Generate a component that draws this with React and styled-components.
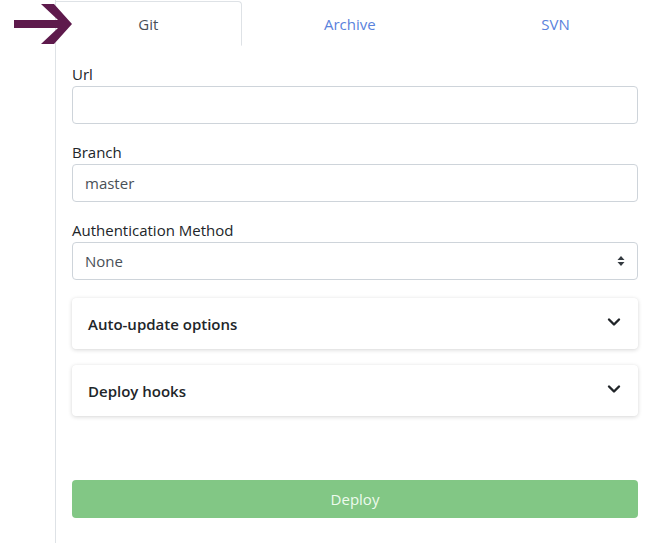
import React from 'react';
import styled, { createGlobalStyle } from 'styled-components';

const GlobalStyle = createGlobalStyle`
    * { box-sizing: border-box; }
    body {
        margin: 0;
        background: #fff;
        font-family: "Open Sans", "Noto Sans", "Liberation Sans", sans-serif;
        color: #212529;
    }
`;

const tabs = ['Git', 'Archive', 'SVN'];

function Arrow() {
    return (
        <ArrowMark width="74" height="48" viewBox="0 0 74 48">
            <polygon
                fill="#5e1a4c"
                points="14,20 58,20 41,4 54,4 72,24 54,44 41,44 58,28 14,28"
            />
        </ArrowMark>
    );
}

function Chevron() {
    return (
        <svg width="14" height="10" viewBox="0 0 14 10">
            <path
                d="M2 2.5 L7 7.5 L12 2.5"
                fill="none"
                stroke="#212529"
                strokeWidth="2.4"
                strokeLinecap="round"
                strokeLinejoin="round"
            />
        </svg>
    );
}

function SelectArrows() {
    return (
        <svg width="8" height="12" viewBox="0 0 8 12">
            <polygon points="4,1 7.5,5 0.5,5" fill="#343a40" />
            <polygon points="0.5,7 7.5,7 4,11" fill="#343a40" />
        </svg>
    );
}

function App() {
    return (
        <>
            <GlobalStyle />
            <Page>
                <Arrow />
                <Panel>
                    <TabBar>
                        {tabs.map((t, i) => (
                            <Tab key={t} active={i === 0}>
                                {t}
                            </Tab>
                        ))}
                    </TabBar>
                    <Body>
                        <Group>
                            <Label>Url</Label>
                            <Input />
                        </Group>
                        <Group>
                            <Label>Branch</Label>
                            <Input>master</Input>
                        </Group>
                        <Group>
                            <Label>Authentication Method</Label>
                            <Select>
                                None
                                <SelectArrows />
                            </Select>
                        </Group>
                        <Card>
                            <CardTitle>Auto-update options</CardTitle>
                            <Chevron />
                        </Card>
                        <Card>
                            <CardTitle>Deploy hooks</CardTitle>
                            <Chevron />
                        </Card>
                        <DeployButton>Deploy</DeployButton>
                    </Body>
                </Panel>
            </Page>
        </>
    );
}

export default App;

const Page = styled.div`
    position: relative;
    height: 543px;
    padding-left: 55px;
    overflow: hidden;
`;

const ArrowMark = styled.svg`
    position: absolute;
    left: 0;
    top: 0;
    z-index: 2;
`;

const Panel = styled.div`
    height: 100%;
    border-left: 1px solid #dee2e6;
`;

const TabBar = styled.div`
    display: flex;
    height: 46px;
    padding-top: 1px;
    border-bottom: 1px solid #dee2e6;
`;

const Tab = styled.div`
    flex: 1 1 auto;
    display: flex;
    align-items: center;
    justify-content: center;
    padding: 0 16px;
    margin-bottom: -1px;
    font-size: 15px;
    color: ${(p) => (p.active ? '#495057' : '#5a82dc')};
    background: #fff;
    border: 1px solid ${(p) => (p.active ? '#dee2e6' : 'transparent')};
    border-bottom-color: ${(p) => (p.active ? '#fff' : 'transparent')};
    border-left: none;
    border-radius: 0 4px 0 0;
`;

const Body = styled.div`
    padding: 16px 15px 0 16px;
    display: flex;
    flex-direction: column;
`;

const Group = styled.div`
    display: flex;
    flex-direction: column;
    margin-bottom: 16px;
`;

const Label = styled.div`
    font-size: 15px;
    line-height: 24px;
    color: #212529;
`;

const Input = styled.div`
    height: 38px;
    border: 1px solid #ced4da;
    border-radius: 4px;
    padding: 0 12px;
    display: flex;
    align-items: center;
    font-size: 15px;
    color: #495057;
`;

const Select = styled(Input)`
    justify-content: space-between;
    padding-right: 12px;
`;

const Card = styled.div`
    height: 51px;
    margin-top: 2px;
    margin-bottom: 14px;
    padding: 0 17px 0 16px;
    display: flex;
    align-items: center;
    justify-content: space-between;
    border-radius: 4px;
    box-shadow: 0 1px 4px rgba(0, 0, 0, 0.16), 0 0 1px rgba(0, 0, 0, 0.06);
    & > svg {
        margin-top: -4px;
    }
`;

const CardTitle = styled.div`
    font-size: 15px;
    font-weight: 600;
    color: #212529;
`;

const DeployButton = styled.div`
    margin-top: 50px;
    height: 38px;
    border-radius: 4px;
    background: #82c785;
    color: #eefbee;
    font-size: 15px;
    display: flex;
    align-items: center;
    justify-content: center;
`;
